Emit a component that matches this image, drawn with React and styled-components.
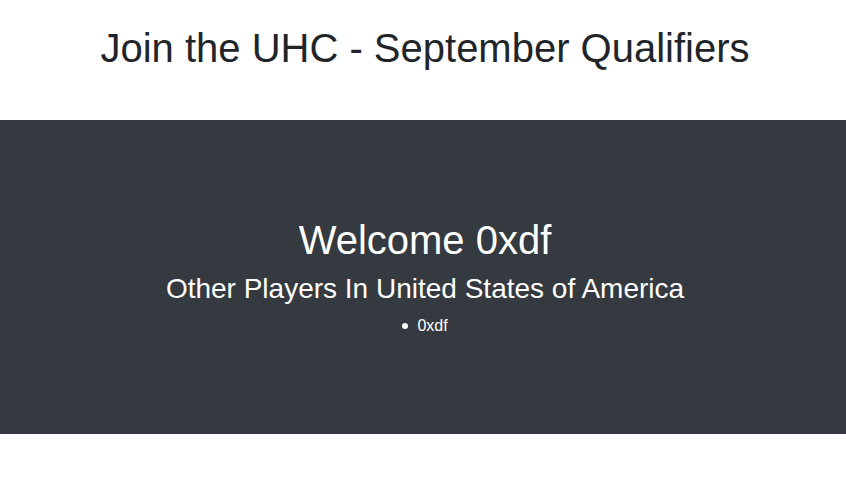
import React from "react";
import styled, { createGlobalStyle } from "styled-components";

const Global = createGlobalStyle`
  html, body { margin: 0; padding: 0; background: #fff; }
  body {
    font-family: "Liberation Sans", Arial, Helvetica, sans-serif;
    font-size: 16px;
    line-height: 1.5;
    color: #212529;
  }
`;

const Page = styled.div`
  display: flex;
  flex-direction: column;
`;

const Header = styled.header`
  padding: 24px 0 48px 4px;
  text-align: center;
`;

const Title = styled.h1`
  margin: 0;
  font-size: 40px;
  font-weight: 400;
  line-height: 1.2;
`;

const Band = styled.section`
  background: #343a40;
  color: #fff;
  height: 314px;
  padding-left: 4px;
  display: flex;
  flex-direction: column;
  align-items: center;
  justify-content: center;
  text-align: center;
`;

const Welcome = styled.h1`
  margin: 0 0 8px;
  font-size: 40px;
  font-weight: 400;
  line-height: 1.2;
`;

const Sub = styled.h3`
  margin: 0 0 8px;
  font-size: 28px;
  font-weight: 400;
  line-height: 1.2;
`;

const Players = styled.ul`
  margin: 0;
  padding: 0;
  list-style: none;
`;

const Player = styled.li`
  font-size: 16px;
  line-height: 24px;
  &::before {
    content: "";
    display: inline-block;
    width: 6px;
    height: 6px;
    border-radius: 50%;
    background: #fff;
    margin-right: 9px;
    vertical-align: middle;
    position: relative;
    top: -1px;
  }
`;

export default function App() {
  return (
    <Page>
      <Global />
      <Header>
        <Title>Join the UHC - September Qualifiers</Title>
      </Header>
      <Band>
        <Welcome>Welcome 0xdf</Welcome>
        <Sub>Other Players In United States of America</Sub>
        <Players>
          <Player>0xdf</Player>
        </Players>
      </Band>
    </Page>
  );
}
